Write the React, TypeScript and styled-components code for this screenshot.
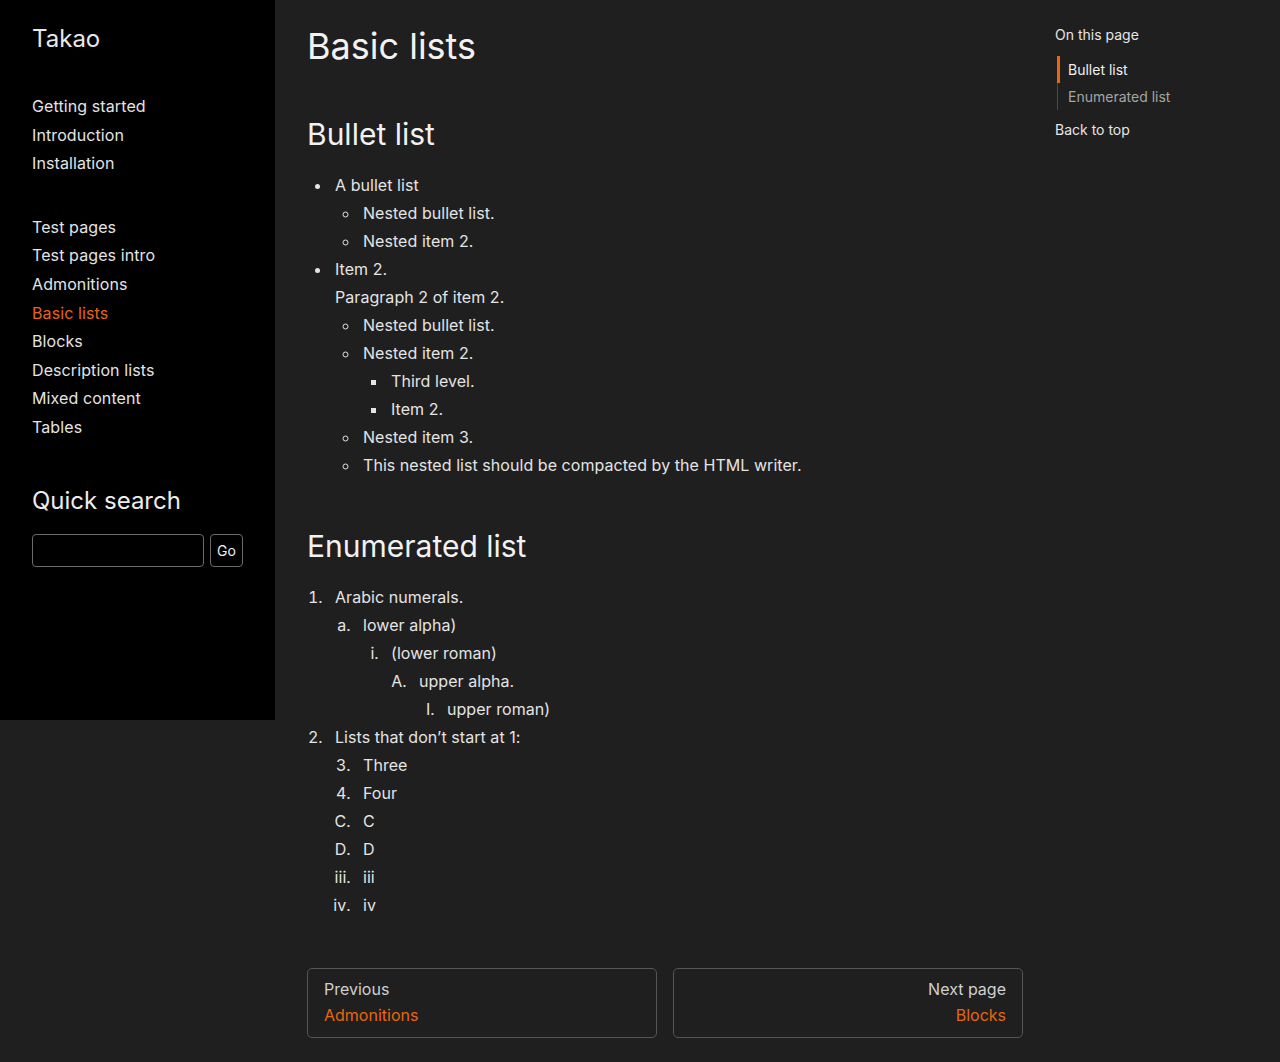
import React from "react";
import styled, { createGlobalStyle } from "styled-components";

const Global = createGlobalStyle`
  html, body { margin: 0; padding: 0; background: #1f1f1f; }
  body { font-family: Inter, "Noto Sans", sans-serif; color: #e4e4e4; font-size: 16px; }
  * { box-sizing: border-box; }
`;

const orange = "#e8660f";

const Page = styled.div`
  display: flex;
  align-items: flex-start;
  min-height: 1062px;
  background: #1f1f1f;
`;

const Sidebar = styled.aside`
  width: 275px;
  flex: none;
  height: 720px;
  background: #000;
  padding: 23px 32px 0 32px;
`;

const Brand = styled.div`
  font-size: 24px;
  line-height: 32px;
  color: #e8e8e8;
  margin-bottom: 37px;
`;

const NavGroup = styled.ul`
  list-style: none;
  margin: 0 0 35px 0;
  padding: 0;
`;

const NavItem = styled.li<{ $active?: boolean }>`
  font-size: 16px;
  line-height: 28.6px;
  letter-spacing: 0.1px;
  color: ${(p) => (p.$active ? orange : "#e4e4e4")};
`;

const SearchTitle = styled.h3`
  font-size: 24px;
  font-weight: 400;
  line-height: 32px;
  margin: 43px 0 17px 0;
  color: #ececec;
`;

const SearchRow = styled.form`
  display: flex;
  gap: 6px;
`;

const SearchInput = styled.input`
  width: 172px;
  height: 33px;
  background: #000;
  border: 1px solid #6a6a6a;
  border-radius: 4px;
  color: #eee;
`;

const GoButton = styled.button`
  width: 33px;
  height: 33px;
  background: #000;
  border: 1px solid #6a6a6a;
  border-radius: 4px;
  color: #eee;
  font-family: Inter, sans-serif;
  font-size: 14px;
  padding: 0;
`;

const Main = styled.main`
  width: 716px;
  flex: none;
  margin-left: 32px;
  padding-top: 25px;
`;

const H1 = styled.h1`
  font-size: 36px;
  font-weight: 400;
  line-height: 43px;
  margin: 0;
  color: #f2f2f2;
`;

const H2 = styled.h2`
  font-size: 30px;
  font-weight: 400;
  line-height: 36px;
  margin: 48px 0 19px 0;
  color: #f2f2f2;
`;

const UL = styled.ul<{ $type: string; $top?: boolean }>`
  list-style-type: ${(p) => p.$type};
  margin: 0;
  padding: 0 0 ${(p) => (p.$top ? "1px" : "0")} 25px;
  & > li { padding-left: 3px; }
`;

const OL = styled.ol<{ $type: string; $top?: boolean }>`
  list-style-type: ${(p) => p.$type};
  margin: 0;
  padding: 0 0 ${(p) => (p.$top ? "1px" : "0")} 20px;
  & > li { padding-left: 8px; }
`;

const LI = styled.li`
  line-height: 28px;
  font-size: 16px;
  letter-spacing: 0.05px;
  color: #e4e4e4;
`;

const Para = styled.p`
  margin: 0;
`;

const Pager = styled.nav`
  display: grid;
  grid-template-columns: 1fr 1fr;
  gap: 16px;
  margin-top: 48px;
`;

const PagerCard = styled.a<{ $right?: boolean }>`
  display: flex;
  flex-direction: column;
  align-items: ${(p) => (p.$right ? "flex-end" : "flex-start")};
  border: 1px solid #555;
  border-radius: 5px;
  padding: 7px 16px 10px 16px;
  height: 70px;
  text-decoration: none;
`;

const PagerLabel = styled.span`
  font-size: 16px;
  line-height: 26px;
  color: #d0d0d0;
`;

const PagerLink = styled.span`
  font-size: 16px;
  line-height: 26px;
  color: ${orange};
`;

const Toc = styled.aside`
  margin-left: 32px;
  padding-top: 25px;
  width: 193px;
  font-size: 14px;
`;

const TocTitle = styled.div`
  line-height: 20px;
  color: #e6e6e6;
  margin-bottom: 11px;
`;

const TocList = styled.ul`
  list-style: none;
  margin: 0 0 10px 2px;
  padding: 0;
  border-left: 1px solid #4a4a4a;
`;

const TocItem = styled.li<{ $active?: boolean }>`
  line-height: 27px;
  padding-left: 8px;
  margin-left: -1px;
  border-left: 3px solid ${(p) => (p.$active ? orange : "transparent")};
  color: ${(p) => (p.$active ? "#f0f0f0" : "#a5a5a5")};
`;

const BackTop = styled.div`
  line-height: 20px;
  color: #e6e6e6;
`;

export default function App() {
  return (
    <>
      <Global />
      <Page>
        <Sidebar>
          <Brand>Takao</Brand>
          <NavGroup>
            <NavItem>Getting started</NavItem>
            <NavItem>Introduction</NavItem>
            <NavItem>Installation</NavItem>
          </NavGroup>
          <NavGroup>
            <NavItem>Test pages</NavItem>
            <NavItem>Test pages intro</NavItem>
            <NavItem>Admonitions</NavItem>
            <NavItem $active>Basic lists</NavItem>
            <NavItem>Blocks</NavItem>
            <NavItem>Description lists</NavItem>
            <NavItem>Mixed content</NavItem>
            <NavItem>Tables</NavItem>
          </NavGroup>
          <SearchTitle>Quick search</SearchTitle>
          <SearchRow onSubmit={(e) => e.preventDefault()}>
            <SearchInput type="text" aria-label="search" />
            <GoButton type="submit">Go</GoButton>
          </SearchRow>
        </Sidebar>
        <Main>
          <H1>Basic lists</H1>
          <H2>Bullet list</H2>
          <UL $type="disc" $top>
            <LI>
              A bullet list
              <UL $type="circle">
                <LI>Nested bullet list.</LI>
                <LI>Nested item 2.</LI>
              </UL>
            </LI>
            <LI>
              <Para>Item 2.</Para>
              <Para>Paragraph 2 of item 2.</Para>
              <UL $type="circle">
                <LI>Nested bullet list.</LI>
                <LI>
                  Nested item 2.
                  <UL $type="square">
                    <LI>Third level.</LI>
                    <LI>Item 2.</LI>
                  </UL>
                </LI>
                <LI>Nested item 3.</LI>
                <LI>This nested list should be compacted by the HTML writer.</LI>
              </UL>
            </LI>
          </UL>
          <H2>Enumerated list</H2>
          <OL $type="decimal" $top>
            <LI>
              Arabic numerals.
              <OL $type="lower-alpha">
                <LI>
                  lower alpha)
                  <OL $type="lower-roman">
                    <LI>
                      (lower roman)
                      <OL $type="upper-alpha">
                        <LI>
                          upper alpha.
                          <OL $type="upper-roman">
                            <LI>upper roman)</LI>
                          </OL>
                        </LI>
                      </OL>
                    </LI>
                  </OL>
                </LI>
              </OL>
            </LI>
            <LI>
              Lists that don’t start at 1:
              <OL $type="decimal" start={3}>
                <LI>Three</LI>
                <LI>Four</LI>
              </OL>
              <OL $type="upper-alpha" start={3}>
                <LI>C</LI>
                <LI>D</LI>
              </OL>
              <OL $type="lower-roman" start={3}>
                <LI>iii</LI>
                <LI>iv</LI>
              </OL>
            </LI>
          </OL>
          <Pager>
            <PagerCard>
              <PagerLabel>Previous</PagerLabel>
              <PagerLink>Admonitions</PagerLink>
            </PagerCard>
            <PagerCard $right>
              <PagerLabel>Next page</PagerLabel>
              <PagerLink>Blocks</PagerLink>
            </PagerCard>
          </Pager>
        </Main>
        <Toc>
          <TocTitle>On this page</TocTitle>
          <TocList>
            <TocItem $active>Bullet list</TocItem>
            <TocItem>Enumerated list</TocItem>
          </TocList>
          <BackTop>Back to top</BackTop>
        </Toc>
      </Page>
    </>
  );
}
